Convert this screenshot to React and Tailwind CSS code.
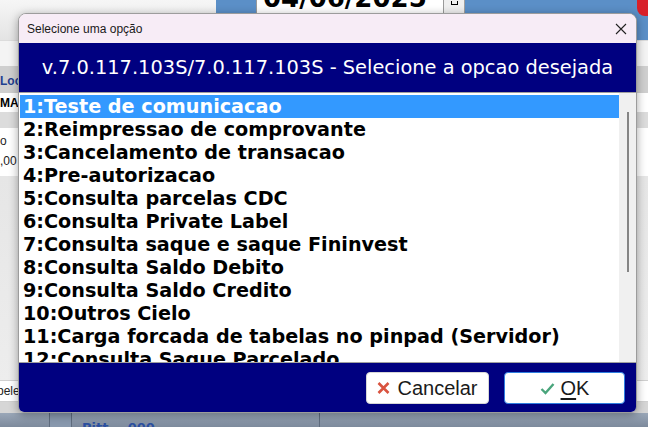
import React from "react";

const items = [
  "1:Teste de comunicacao",
  "2:Reimpressao de comprovante",
  "3:Cancelamento de transacao",
  "4:Pre-autorizacao",
  "5:Consulta parcelas CDC",
  "6:Consulta Private Label",
  "7:Consulta saque e saque Fininvest",
  "8:Consulta Saldo Debito",
  "9:Consulta Saldo Credito",
  "10:Outros Cielo",
  "11:Carga forcada de tabelas no pinpad (Servidor)",
  "12:Consulta Saque Parcelado",
];

const Background = () => {
  return (
    <div className="flex flex-col w-full h-full">
      {/* top strip */}
      <div className="flex h-[40px] shrink-0">
        <div className="w-[216px] bg-gradient-to-b from-[#f6f6f6] to-[#e4e4e4]" />
        <div className="w-[40px] bg-[#5b8fc7]" />
        <div className="w-[188px] bg-white border-x border-[#9a9a9a] overflow-hidden">
          <div className="-mt-[15px] pl-[6px] text-[26px] leading-[26px] font-bold text-black font-['DejaVu_Sans',sans-serif]">
            04/06/2025
          </div>
        </div>
        <div className="w-[21px] bg-[#efefef] border-r border-[#a0a0a0] flex justify-center">
          <div className="mt-[1px] w-[7px] h-[4px] border-b border-x border-black" />
        </div>
        <div className="flex-1 bg-[#5b8fc7]" />
        <div className="w-[11px] bg-[#5b8fc7] flex flex-col">
          <div className="h-[16px] bg-[#d8202a] rounded-bl-[8px]" />
        </div>
      </div>
      {/* left column rows */}
      <div className="flex flex-col flex-1 text-[12px] font-['Liberation_Sans',sans-serif]">
        <div className="h-[26px] bg-[#f4f4f4] border-t border-[#dcdcdc]" />
        <div className="h-[27px] bg-[#cfcfcf] flex items-end pb-[3px] font-bold text-[#1f3f8f]">Loc</div>
        <div className="h-[19px] bg-white flex items-center font-bold text-black">MA</div>
        <div className="h-[16px] bg-[#dcdcdc]" />
        <div className="h-[48px] bg-white flex flex-col text-[#222]">
          <div className="h-[22px] flex items-end">o</div>
          <div className="h-[22px] flex items-center">,00</div>
        </div>
        <div className="flex-1 bg-gradient-to-b from-[#e6e6e6] to-[#ededed]" />
        <div className="h-[22px] bg-white flex items-center text-[#222] border-y border-[#d0d0d0]">
          <span className="-ml-[3px]">pele</span>
        </div>
        <div className="h-[11px] bg-[#d6d6d6]" />
      </div>
      {/* bottom band */}
      <div className="h-[14px] shrink-0 flex bg-gradient-to-b from-[#9aa7b8] to-[#7d8a9c]">
        <div className="w-[50px] border-r border-[#5f6c7e]" />
        <div className="w-[22px] border-r border-[#5f6c7e] bg-[#8898ad]" />
        <div className="w-[248px] border-r border-[#5f6c7e] overflow-hidden pl-[10px]">
          <div className="mt-[8px] text-[13px] leading-[13px] font-bold text-[#2b4fa0] font-['DejaVu_Sans',sans-serif]">
            Pitt... 000
          </div>
        </div>
        <div className="flex-1" />
      </div>
    </div>
  );
};

const Dialog = () => {
  return (
    <div className="absolute left-[18px] top-[13px] w-[619px] h-[400px] flex flex-col bg-white border border-[#9c9c9c] rounded-t-[8px] rounded-b-[6px] overflow-hidden shadow-[0_2px_10px_rgba(0,0,0,0.35)]">
      {/* title bar */}
      <div className="h-[29px] shrink-0 bg-[#f7ecf6] flex items-center justify-between pl-[8px] pr-[8px] font-['Liberation_Sans',sans-serif]">
        <span className="text-[12px] text-[#1a1a1a]">Selecione uma opção</span>
        <svg width="12" height="12" viewBox="0 0 12 12" className="mr-[1px]">
          <path d="M1 1 L11 11 M11 1 L1 11" stroke="#222" strokeWidth="1.1" />
        </svg>
      </div>
      {/* header */}
      <div className="h-[49px] shrink-0 bg-[#000080] flex items-center justify-center">
        <span className="text-white text-[19.4px] font-['DejaVu_Sans',sans-serif] whitespace-nowrap">
          v.7.0.117.103S/7.0.117.103S - Selecione a opcao desejada
        </span>
      </div>
      {/* list */}
      <div className="h-[271px] shrink-0 flex border-y border-[#a0a0a0] bg-white">
        <div className="w-[600px] pt-[2px] pl-[1px] overflow-hidden">
          {items.map((t, i) => (
            <div
              key={t}
              className={
                i === 0
                  ? "h-[23px] leading-[23px] pl-[3px] bg-[#3399ff] text-white font-bold text-[19.2px] font-['DejaVu_Sans',sans-serif] whitespace-nowrap"
                  : "h-[23px] leading-[23px] pl-[3px] text-black font-bold text-[19.2px] font-['DejaVu_Sans',sans-serif] whitespace-nowrap"
              }
            >
              {t}
            </div>
          ))}
        </div>
        <div className="flex-1 bg-[#f0f0f0] flex justify-center">
          <div className="mt-[19px] w-[2px] h-[160px] bg-[#858585]" />
        </div>
      </div>
      {/* footer */}
      <div className="flex-1 bg-[#000080] flex justify-end items-start pt-[9px] pr-[11px] gap-[15px] font-['Liberation_Sans',sans-serif]">
        <button className="w-[123px] h-[32px] bg-white rounded-[4px] border border-[#d6d6d6] flex items-center justify-center gap-[7px] text-[20px] text-[#1a1a1a]">
          <svg width="13" height="14" viewBox="0 0 13 14">
            <path d="M1.5 2 L11.5 12 M11.5 2 L1.5 12" stroke="#d9533f" strokeWidth="2.6" />
          </svg>
          <span>Cancelar</span>
        </button>
        <button className="w-[121px] h-[32px] bg-white rounded-[4px] border border-[#2f7fe0] flex items-center justify-center gap-[6px] text-[20px] text-[#1a1a1a]">
          <svg width="15" height="13" viewBox="0 0 15 13">
            <path d="M1.5 7 L5.5 11 L13.5 2" stroke="#4aa57c" strokeWidth="2.4" fill="none" />
          </svg>
          <span>
            <span className="underline underline-offset-[3px]">O</span>K
          </span>
        </button>
      </div>
    </div>
  );
};

const App = () => {
  return (
    <div className="relative w-[648px] h-[427px] overflow-hidden bg-[#e8e8e8]">
      <Background />
      <Dialog />
    </div>
  );
};

export default App;
